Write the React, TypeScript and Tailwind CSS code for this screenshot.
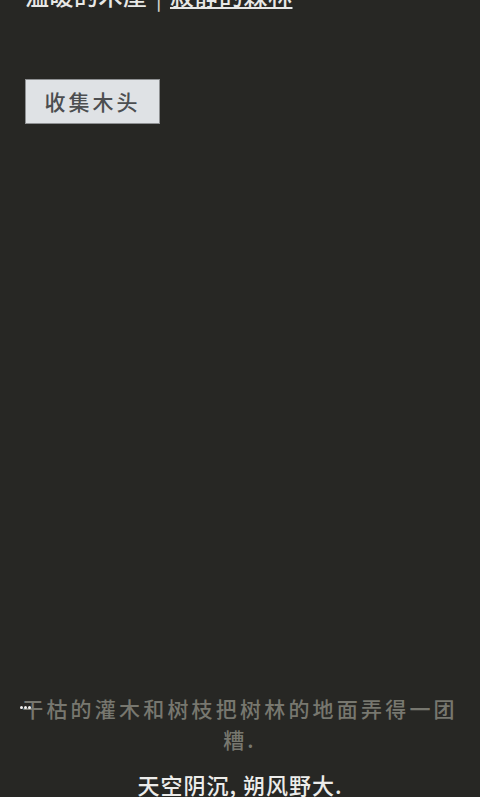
export default function App() {
  const font = { fontFamily: '"Noto Sans CJK SC", "Liberation Sans", sans-serif' }
  return (
    <div className="relative h-[797px] w-[480px] overflow-hidden bg-[#272724]" style={font}>
      {/* header: location tabs, scrolled partly off the top */}
      <div className="mt-[-17px] flex items-center px-[25px] text-[24px] font-medium leading-[24px] text-[#e8e8e6]">
        <span className="tracking-[0.5px]">温暖的木屋</span>
        <span className="mx-[8px] font-normal text-[#cfcfcc]">|</span>
        <span className="underline decoration-[2px] underline-offset-[2px] tracking-[0.5px]">寂静的森林</span>
      </div>

      <div className="mt-[72px] px-[25px]">
        <button className="flex h-[45px] w-[135px] items-center justify-center border border-[#8e9092] bg-[#dfe2e5] text-[21px] font-medium tracking-[3px] text-[#4c4e50]">
          收集木头
        </button>
      </div>

      {/* notifications */}
      <div className="absolute bottom-0 left-0 right-0 flex flex-col items-center px-[14px] text-center">
        <div className="relative text-[21px] font-medium leading-[31px] tracking-[3.2px] text-[#77776f]">
          <div className="absolute left-[6px] top-[13px] flex gap-[1px]">
            <span className="h-[3px] w-[3px] rounded-full bg-[#f0f0f0]" />
            <span className="h-[3px] w-[3px] rounded-full bg-[#f0f0f0]" />
            <span className="h-[3px] w-[3px] rounded-full bg-[#f0f0f0]" />
          </div>
          干枯的灌木和树枝把树林的地面弄得一团糟.
        </div>
        <div className="mt-[14px] mb-[-3px] text-[22px] font-medium leading-[31px] tracking-[1px] text-[#ececea]">
          天空阴沉, 朔风野大.
        </div>
      </div>
    </div>
  )
}
